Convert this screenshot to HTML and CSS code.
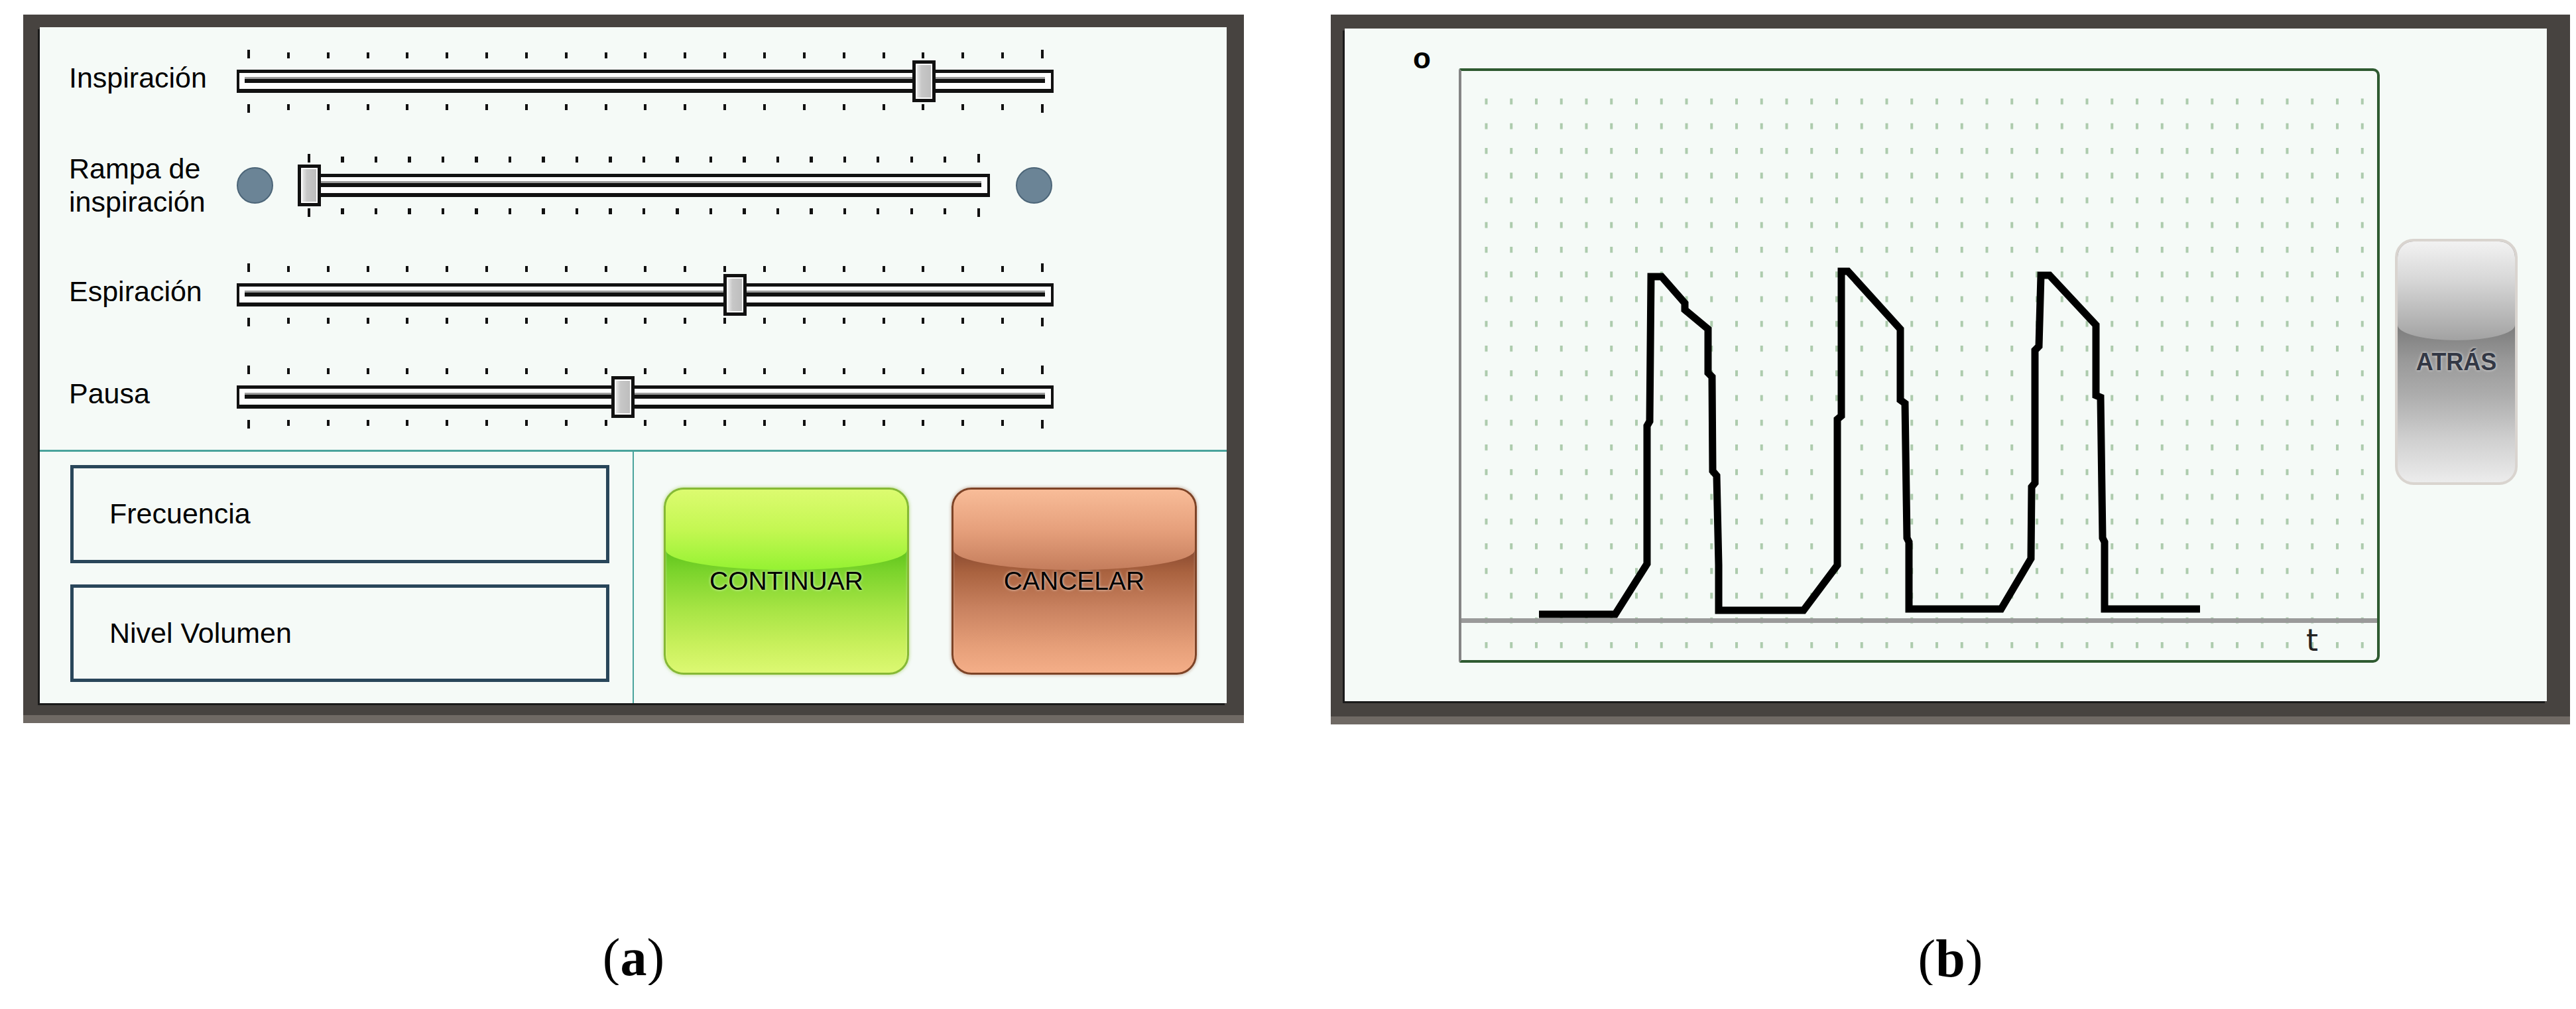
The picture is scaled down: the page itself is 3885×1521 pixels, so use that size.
FILE: index.html
```html
<!DOCTYPE html>
<html lang="es">
<head>
    <meta charset="UTF-8">
    <title>Ventilador - Configuración y curva</title>
    <link rel="stylesheet" href="styles.css">
</head>
<body>
    <div class="figures">
        <!-- (a) settings screen -->
        <div class="figure figure-a">
            <div class="screen screen-a">
                <div class="screen-inner settings">
                    <div class="sliders">
                        <div class="slider-row">
                            <span class="slider-label">Inspiración</span>
                            <div class="slider">
                                <div class="ticks ticks-top"></div>
                                <div class="track"><span class="thumb" style="left: 82.9%"></span></div>
                                <div class="ticks ticks-bottom"></div>
                            </div>
                        </div>
                        <div class="slider-row">
                            <span class="slider-label slider-label-wrap">Rampa de<br>inspiración</span>
                            <span class="knob"></span>
                            <div class="slider slider-short">
                                <div class="ticks ticks-top"></div>
                                <div class="track"><span class="thumb" style="left: -0.4%"></span></div>
                                <div class="ticks ticks-bottom"></div>
                            </div>
                            <span class="knob"></span>
                        </div>
                        <div class="slider-row">
                            <span class="slider-label">Espiración</span>
                            <div class="slider">
                                <div class="ticks ticks-top"></div>
                                <div class="track"><span class="thumb" style="left: 59.6%"></span></div>
                                <div class="ticks ticks-bottom"></div>
                            </div>
                        </div>
                        <div class="slider-row">
                            <span class="slider-label">Pausa</span>
                            <div class="slider">
                                <div class="ticks ticks-top"></div>
                                <div class="track"><span class="thumb" style="left: 45.8%"></span></div>
                                <div class="ticks ticks-bottom"></div>
                            </div>
                        </div>
                    </div>

                    <div class="controls">
                        <div class="readouts">
                            <div class="readout">Frecuencia</div>
                            <div class="readout">Nivel Volumen</div>
                        </div>
                        <div class="actions">
                            <button class="glossy btn-continue"><span>CONTINUAR</span></button>
                            <button class="glossy btn-cancel"><span>CANCELAR</span></button>
                        </div>
                    </div>
                </div>
            </div>
            <p class="caption">(<b>a</b>)</p>
        </div>

        <!-- (b) pressure curve screen -->
        <div class="figure figure-b">
            <div class="screen screen-b">
                <div class="screen-inner plot-screen">
                    <span class="axis-mark">o</span>
                    <div class="chart">
                        <svg width="1381" height="888" viewBox="0 0 1381 888">
                            <defs>
                                <pattern id="dots" x="35.5" y="41.5" width="37.75" height="37.25" patternUnits="userSpaceOnUse">
                                    <rect width="4" height="9" fill="#adcbad"/>
                                </pattern>
                            </defs>
                            <rect x="30" y="36" width="1351" height="852" fill="url(#dots)"/>
                            <rect x="0" y="825" width="1381" height="7" fill="#9a9a9a"/>
                            <polyline fill="none" stroke="#000" stroke-width="11"
                                points="117,819 232,819 280,743 280,535 284,528 286,310 302,310 337,350 337,360 372,389 372,455 378,461 379,603 385,610 388,745 388,813 516,813 567,745 567,525 573,520 573,302 583,302 662,389 662,496 669,501 672,704 675,710 675,811 814,811 859,735 860,627 865,621 865,421 871,415 874,308 887,308 957,383 957,489 964,492 967,704 970,710 970,811 1114,811"/>
                            <text x="1283" y="874" class="axis-t">t</text>
                        </svg>
                    </div>
                    <button class="glossy btn-back"><span>ATRÁS</span></button>
                </div>
            </div>
            <p class="caption">(<b>b</b>)</p>
        </div>
    </div>
</body>
</html>
```

FILE: styles.css
```css
/* Page */
body {
    margin: 0;
    background-color: #fff;
    font-family: "Liberation Sans", Arial, sans-serif;
    color: #000;
}

.figures {
    display: flex;
    gap: 131px;
    padding: 22px 0 0 35px;
}

.figure-a {
    width: 1841px;
}

.figure-b {
    width: 1869px;
}

/* Device frame around each screen */
.screen {
    box-sizing: border-box;
    background: linear-gradient(to top, #6f6964 0 12px, #474340 12px);
}

.screen-a {
    height: 1068px;
    padding: 19px 26px 30px 25px;
}

.screen-b {
    height: 1070px;
    padding: 21px 35px 35px 21px;
}

.screen-inner {
    height: 100%;
    background-color: #f5faf7;
    box-shadow: -3px 3px 0 #1a1a1a;
}

/* Settings screen */
.settings {
    display: flex;
    flex-direction: column;
}

.sliders {
    display: flex;
    flex-direction: column;
    padding: 34px 0 32px 44px;
}

.slider-row {
    display: flex;
    align-items: center;
    height: 95px;
}

.slider-row + .slider-row {
    margin-top: 62px;
}

.slider-row:nth-child(3) {
    margin-top: 70px;
}

.slider-row:nth-child(4) {
    margin-top: 59px;
}

.slider-label {
    width: 253px;
    flex-shrink: 0;
    font-size: 43px;
    line-height: 1.15;
    margin-bottom: 10px;
}

.slider-label-wrap {
    margin-bottom: 0;
}

.slider {
    width: 1232px;
    display: flex;
    flex-direction: column;
    gap: 17px;
}

.slider-short {
    width: 1044px;
    margin: 0 39px 0 37px;
}

/* Tick marks: longer end ticks plus a row of short ones */
.ticks {
    height: 13px;
    margin: 0 15px 0 16px;
    background:
        linear-gradient(#111, #111) left / 4px 100% no-repeat,
        linear-gradient(#111, #111) right / 4px 100% no-repeat,
        repeating-linear-gradient(to right, #111 0 4px, transparent 4px 59.85px) left bottom / 100% 9px no-repeat;
}

.ticks-bottom {
    background:
        linear-gradient(#111, #111) left / 4px 100% no-repeat,
        linear-gradient(#111, #111) right / 4px 100% no-repeat,
        repeating-linear-gradient(to right, #111 0 4px, transparent 4px 59.85px) left top / 100% 9px no-repeat;
}

.slider-short .ticks {
    margin: 0 15px;
    background:
        linear-gradient(#111, #111) left / 4px 100% no-repeat,
        linear-gradient(#111, #111) right / 4px 100% no-repeat,
        repeating-linear-gradient(to right, #111 0 4px, transparent 4px 50.5px) left bottom / 100% 9px no-repeat;
}

.slider-short .ticks-bottom {
    background:
        linear-gradient(#111, #111) left / 4px 100% no-repeat,
        linear-gradient(#111, #111) right / 4px 100% no-repeat,
        repeating-linear-gradient(to right, #111 0 4px, transparent 4px 50.5px) left top / 100% 9px no-repeat;
}

.track {
    position: relative;
    height: 35px;
    box-sizing: border-box;
    border: solid #111;
    border-width: 5px 4px 6px;
    padding: 0 9px 0 8px;
    background:
        linear-gradient(to bottom, transparent 6px, #9c9c9c 6px 9px, #111 9px 15px, transparent 15px) content-box,
        #fdfdfd;
}

.thumb {
    position: absolute;
    top: -19px;
    width: 35px;
    height: 63px;
    box-sizing: border-box;
    border: 5px solid #111;
    background: linear-gradient(to right, #f2f2f2, #c7c7c7 35%, #bcbcbc);
    box-shadow: inset 0 0 0 2px #fff;
}

.knob {
    width: 55px;
    height: 55px;
    flex-shrink: 0;
    box-sizing: border-box;
    border-radius: 50%;
    border: 2px solid #4c6578;
    background-color: #6b8496;
}

/* Bottom part of the settings screen */
.controls {
    flex: 1;
    display: flex;
    border-top: 3px solid #4aa39c;
}

.readouts {
    width: 896px;
    box-sizing: border-box;
    display: flex;
    flex-direction: column;
    gap: 32px;
    padding: 20px 35px 32px 46px;
    border-right: 2px solid #4aa39c;
}

.readout {
    flex: 1;
    display: flex;
    align-items: center;
    padding-left: 54px;
    border: 5px solid #29465a;
    font-size: 43px;
}

.actions {
    flex: 1;
    display: flex;
    align-items: center;
    gap: 64px;
    padding: 10px 0 0 45px;
}

/* Glossy buttons */
.glossy {
    position: relative;
    overflow: hidden;
    padding: 0;
    border: 3px solid;
    border-radius: 30px;
    font-family: "Liberation Sans", Arial, sans-serif;
    color: #000;
    text-shadow: 0 0 4px rgba(255, 255, 255, 0.8);
    cursor: pointer;
}

.glossy::before {
    content: "";
    position: absolute;
    left: 0;
    right: 0;
    top: 0;
    height: 44%;
    border-radius: 0 0 50% 50% / 0 0 30px 30px;
}

.glossy span {
    position: relative;
}

.btn-continue,
.btn-cancel {
    width: 370px;
    height: 282px;
    font-size: 39px;
}

.btn-continue {
    border-color: #86b935;
    background: linear-gradient(to bottom, #60c41c 33%, #7cd42c 45%, #a6e444 65%, #c9f05c 85%, #dcf872 100%);
    box-shadow: 0 0 4px 1px rgba(150, 200, 70, 0.5), inset 0 3px 3px rgba(255, 255, 255, 0.5);
}

.btn-continue::before {
    background: linear-gradient(to bottom, #dcfb70, #c4f752 50%, #95f232);
}

.btn-cancel {
    border-color: #7d4326;
    background: linear-gradient(to bottom, #8a4a30 33%, #a9623f 45%, #c98260 65%, #e59e78 85%, #f4ae88 100%);
    box-shadow: 0 0 4px 1px rgba(140, 80, 50, 0.4), inset 0 3px 3px rgba(255, 255, 255, 0.4);
}

.btn-cancel::before {
    background: linear-gradient(to bottom, #f8bc98, #e6a07c 50%, #c47d5c);
}

/* Curve screen */
.plot-screen {
    display: flex;
    align-items: center;
}

.axis-mark {
    align-self: flex-start;
    width: 172px;
    flex-shrink: 0;
    box-sizing: border-box;
    padding: 23px 0 0 103px;
    font-size: 44px;
    line-height: 44px;
    font-weight: bold;
}

.chart {
    width: 1389px;
    height: 896px;
    flex-shrink: 0;
    box-sizing: border-box;
    margin: 60px 0 58px;
    border: 4px solid #2e5a30;
    border-left-color: #858585;
    border-radius: 3px 10px 10px 3px;
    background-color: #f5faf7;
    overflow: hidden;
}

.chart svg {
    display: block;
}

.axis-t {
    font-family: "DejaVu Sans", sans-serif;
    font-size: 46px;
    fill: #222;
    text-anchor: middle;
}

.btn-back {
    width: 185px;
    height: 371px;
    flex-shrink: 0;
    margin: 0 0 9px 23px;
    border: 4px solid #d9d4cf;
    border-radius: 28px;
    font-size: 36px;
    font-weight: bold;
    color: #333845;
    background: linear-gradient(to bottom, #7e7e7e 36%, #9a9a9a 50%, #adadad 64%, #cfcfcf 82%, #ececec 100%);
}

.btn-back::before {
    height: 41%;
    border-radius: 0 0 50% 50% / 0 0 23px 23px;
    background: linear-gradient(to bottom, #f2f2f2, #d6d6d6 40%, #a2a2a2);
}

/* Figure captions */
.caption {
    margin: 313px 0 0;
    text-align: center;
    font-family: "Liberation Serif", "Times New Roman", serif;
    font-size: 80px;
    line-height: 80px;
    color: #000;
}
```
